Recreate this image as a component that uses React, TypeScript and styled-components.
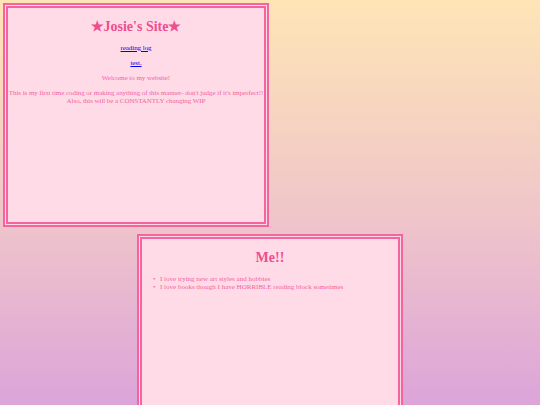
import React from 'react';
import styled, { createGlobalStyle } from 'styled-components';

const GlobalStyle = createGlobalStyle`
  html, body {
    margin: 0;
    padding: 0;
  }

  body {
    min-height: 100vh;
    background: linear-gradient(to bottom, #fee5b6 0%, #efc4ca 55%, #dca4d9 100%);
    background-attachment: fixed;
    font-family: "Liberation Serif", "Times New Roman", serif;
    font-size: 7px;
  }
`;

const Page = styled.div`
  display: flex;
  flex-direction: column;
  align-items: flex-start;
  gap: 7px;
  padding: 3px;
`;

const Panel = styled.section<{ $offset?: number; $height: number }>`
  box-sizing: border-box;
  width: 266px;
  height: ${({ $height }) => $height}px;
  margin-left: ${({ $offset }) => $offset || 0}px;
  padding-top: 2px;
  background: #ffdbe8;
  border: 5px double #f5649f;
  color: #f2639d;
  overflow: hidden;
`;

const Title = styled.h1`
  font-size: 14px;
  font-weight: bold;
  color: #ec4f8f;
  text-align: center;
  margin: 9.4px 0 8.4px;
  line-height: 16px;
`;

const Line = styled.p`
  margin: 7px 0;
  text-align: center;
  line-height: 8px;
  letter-spacing: -0.06px;
`;

const NavLink = styled.a`
  color: #0000ee;
  text-decoration: underline;
`;

const List = styled.ul`
  margin: 7px 0;
  padding-left: 11px;
  list-style: none;
  line-height: 8px;
`;

const Item = styled.li`
  &::before {
    content: "•";
    display: inline-block;
    width: 7px;
  }
`;

const App: React.FC = () => {
  return (
    <>
      <GlobalStyle />
      <Page>
        <Panel $height={224}>
          <Title>★Josie's Site★</Title>
          <Line>
            <NavLink href="#">reading log</NavLink>
          </Line>
          <Line>
            <NavLink href="#">test.</NavLink>
          </Line>
          <Line>Welcome to my website!</Line>
          <Line>
            This is my first time coding or making anything of this manner- don't judge if it's imperfect!!
            <br />
            Also, this will be a CONSTANTLY changing WIP
          </Line>
        </Panel>
        <Panel $offset={134} $height={224}>
          <Title>Me!!</Title>
          <List>
            <Item>I love trying new art styles and hobbies</Item>
            <Item>I love books though I have HORRIBLE reading block sometimes</Item>
          </List>
        </Panel>
      </Page>
    </>
  );
};

export default App;
